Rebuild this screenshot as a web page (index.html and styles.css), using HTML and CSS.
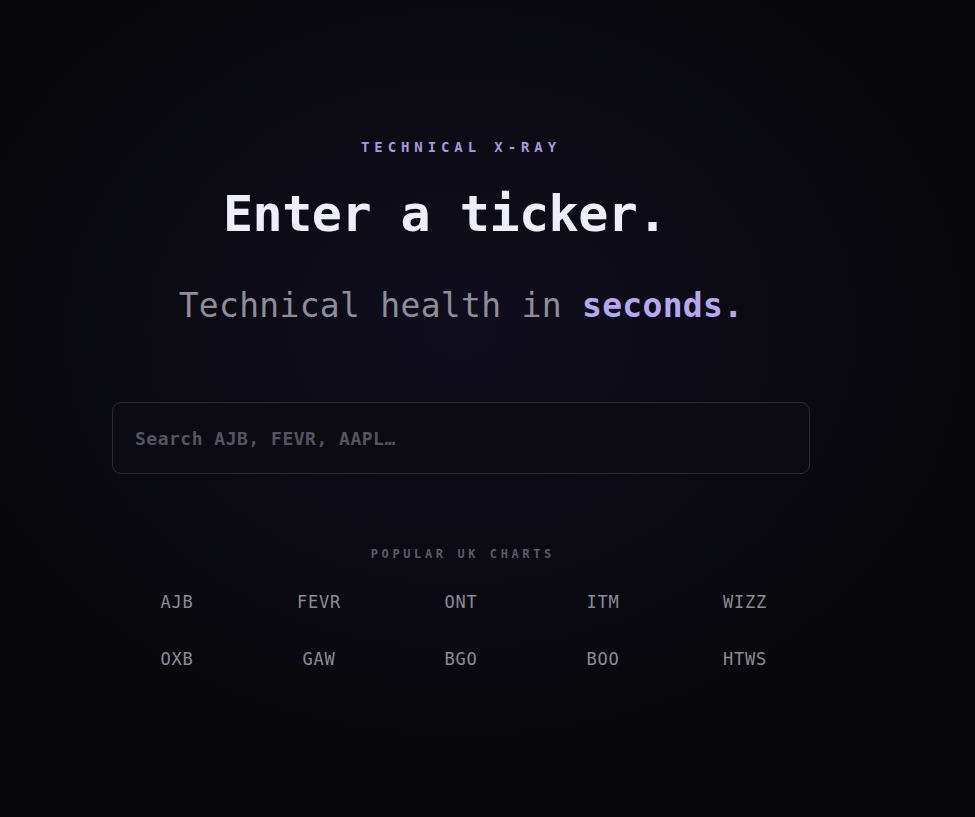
FILE: index.html
```html
<!DOCTYPE html>
<html lang="en">
<head>
<meta charset="utf-8">
<title>Technical X-Ray</title>
<link rel="stylesheet" href="styles.css">
</head>
<body>
<main class="page">
  <section class="hero">
    <p class="eyebrow">TECHNICAL X-RAY</p>
    <h1 class="title">Enter a ticker.</h1>
    <p class="subtitle">Technical health in <span class="accent">seconds.</span></p>
    <div class="search">
      <input class="search-input" type="text" placeholder="Search AJB, FEVR, AAPL…">
    </div>
    <p class="popular-label">POPULAR UK CHARTS</p>
    <div class="tickers">
      <button class="ticker">AJB</button>
      <button class="ticker">FEVR</button>
      <button class="ticker">ONT</button>
      <button class="ticker">ITM</button>
      <button class="ticker">WIZZ</button>
      <button class="ticker">OXB</button>
      <button class="ticker">GAW</button>
      <button class="ticker">BGO</button>
      <button class="ticker">BOO</button>
      <button class="ticker">HTWS</button>
    </div>
  </section>
</main>
</body>
</html>
```

FILE: styles.css
```css
html, body {
  margin: 0;
  padding: 0;
  height: 100%;
}

body {
  background-color: #07070a;
  background-image: radial-gradient(ellipse 520px 420px at 460px 330px, #100e1d 0%, #0c0b15 45%, #08080c 100%);
  font-family: "DejaVu Sans Mono", "Liberation Mono", monospace;
  color: #e8e8f2;
  min-height: 817px;
}

.page {
  width: 698px;
  margin-left: 112px;
  padding-top: 138px;
}

.hero {
  display: flex;
  flex-direction: column;
  align-items: center;
}

.eyebrow {
  margin: 0;
  font-size: 14px;
  font-weight: bold;
  letter-spacing: 0.35em;
  color: #a898dc;
  line-height: 18px;
}

.title {
  margin: 28px 0 0 0;
  padding-right: 32px;
  font-size: 50px;
  font-weight: bold;
  line-height: 60px;
  color: #eeeef8;
  letter-spacing: -0.5px;
}

.subtitle {
  margin: 40px 0 0 0;
  font-size: 33px;
  line-height: 44px;
  color: #8e8e98;
  letter-spacing: 0.3px;
}

.accent {
  color: #b6a8f0;
  font-weight: bold;
}

.search {
  align-self: stretch;
  margin-top: 74px;
}

.search-input {
  box-sizing: border-box;
  width: 100%;
  height: 72px;
  padding: 0 22px;
  background: #0c0b14;
  border: 1px solid #2b2b36;
  border-radius: 9px;
  font-family: "DejaVu Sans Mono", "Liberation Mono", monospace;
  font-size: 18px;
  font-weight: bold;
  color: #d8d8e2;
  outline: none;
  letter-spacing: 0.5px;
}

.search-input::placeholder {
  color: #55555f;
}

.popular-label {
  margin: 72px 0 0 0;
  font-size: 12px;
  font-weight: bold;
  letter-spacing: 0.3em;
  padding-left: 0.3em;
  color: #5b5b66;
  line-height: 16px;
}

.tickers {
  align-self: stretch;
  margin-top: 17px;
  display: grid;
  grid-template-columns: repeat(5, 1fr);
  column-gap: 12px;
  row-gap: 12px;
}

.ticker {
  height: 45px;
  background: transparent;
  border: none;
  font-family: "DejaVu Sans Mono", "Liberation Mono", monospace;
  font-size: 17px;
  color: #8c8c96;
  letter-spacing: 0.8px;
  padding: 0;
  cursor: pointer;
}
```
